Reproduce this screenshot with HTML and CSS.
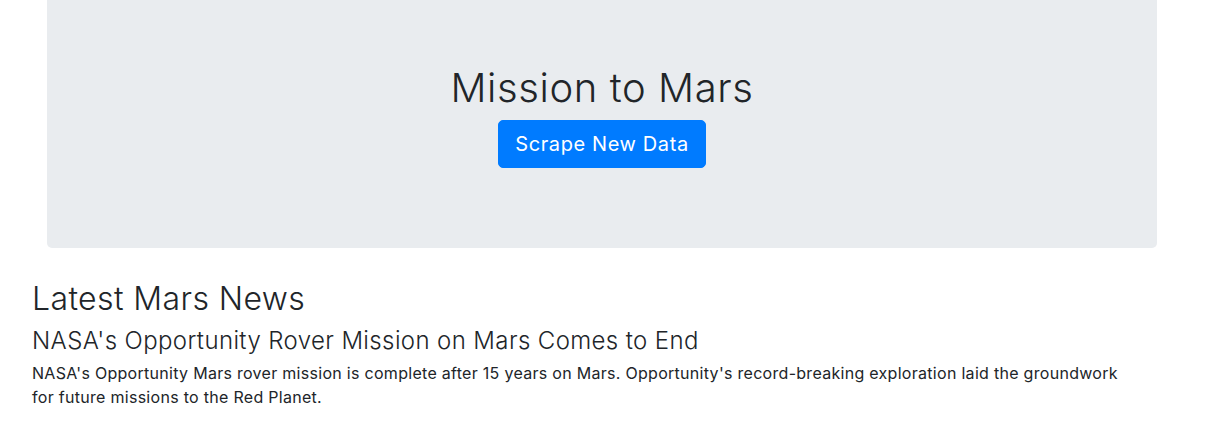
FILE: index.html
```html
<!DOCTYPE html>
<html lang="en">
<head>
<meta charset="utf-8">
<title>Mission to Mars</title>
<link rel="stylesheet" href="styles.css">
</head>
<body>
  <div class="jumbotron">
    <h1 class="title">Mission to Mars</h1>
    <p class="actions"><a class="btn" href="#">Scrape New Data</a></p>
  </div>
  <section class="news">
    <h2 class="news-heading">Latest Mars News</h2>
    <h3 class="news-title">NASA's Opportunity Rover Mission on Mars Comes to End</h3>
    <p class="news-body">NASA's Opportunity Mars rover mission is complete after 15 years on Mars. Opportunity's record-breaking exploration laid the groundwork for future missions to the Red Planet.</p>
  </section>
</body>
</html>
```

FILE: styles.css
```css
* { box-sizing: border-box; }
html, body { margin: 0; padding: 0; background: #fff; }
body {
  font-family: Inter, "Open Sans", "Liberation Sans", sans-serif;
  color: #212529;
  font-size: 16px;
}
.jumbotron {
  margin-left: 47px;
  width: 1110px;
  background: #e9ecef;
  border-radius: 0 0 5px 5px;
  padding: 64px 32px;
  text-align: center;
  margin-bottom: 32px;
}
.title {
  margin: 0 0 8px;
  font-size: 40px;
  font-weight: 300;
  line-height: 48px;
  letter-spacing: 0.6px;
}
.actions { margin: 0 0 16px; }
.btn {
  display: inline-block;
  background: #007bff;
  color: #fff;
  text-decoration: none;
  font-size: 20px;
  line-height: 30px;
  padding: 8px 16px;
  border: 1px solid #007bff;
  border-radius: 5px;
  letter-spacing: 0.6px;
}
.news { padding-left: 32px; width: 1142px; }
.news-heading {
  margin: 0 0 8px;
  font-size: 32px;
  font-weight: 300;
  line-height: 38px;
  letter-spacing: 0.4px;
}
.news-title {
  margin: 0 0 6px;
  font-size: 24px;
  font-weight: 300;
  line-height: 29px;
  letter-spacing: 0.38px;
}
.news-body {
  margin: 0;
  font-size: 16px;
  line-height: 24px;
  letter-spacing: 0.29px;
}
```
